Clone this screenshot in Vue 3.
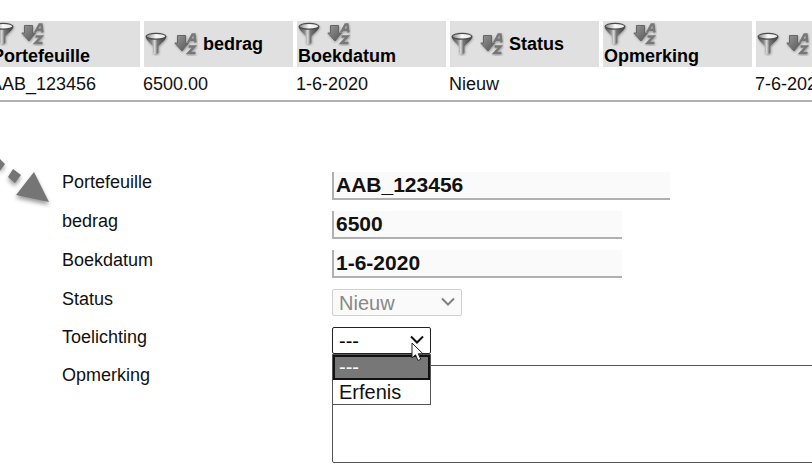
<script setup>
import { ref } from 'vue'

const columns = ['Portefeuille', 'bedrag', 'Boekdatum', 'Status', 'Opmerking', '']
const cells = ['AAB_123456', '6500.00', '1-6-2020', 'Nieuw', '', '7-6-2020']

const portfolio = ref('AAB_123456')
const amount = ref('6500')
const bookingDate = ref('1-6-2020')
const status = ref('Nieuw')
const explanation = ref('---')
const remark = ref('')
const options = ['---', 'Erfenis']
</script>

<template>
  <main class="page">
    <svg class="defs" width="0" height="0" aria-hidden="true">
      <defs>
        <linearGradient id="metal" x1="0" x2="1" y1="0" y2="0">
          <stop offset="0" stop-color="#444" />
          <stop offset="0.3" stop-color="#8a8a8a" />
          <stop offset="0.44" stop-color="#dcdcdc" />
          <stop offset="0.56" stop-color="#777" />
          <stop offset="1" stop-color="#3c3c3c" />
        </linearGradient>
        <linearGradient id="bowl" x1="0" x2="1" y1="0" y2="0">
          <stop offset="0" stop-color="#888" />
          <stop offset="0.5" stop-color="#fafafa" />
          <stop offset="1" stop-color="#e4e4e4" />
        </linearGradient>
        <linearGradient id="arrow" x1="0" x2="1" y1="0" y2="1">
          <stop offset="0" stop-color="#999" />
          <stop offset="1" stop-color="#555" />
        </linearGradient>
        <filter id="soft" x="-20%" y="-20%" width="140%" height="140%">
          <feGaussianBlur in="SourceGraphic" stdDeviation="0.4" result="shape" />
          <feDropShadow in="shape" dx="0.5" dy="1" stdDeviation="0.8" flood-color="#000" flood-opacity="0.35" />
        </filter>
      </defs>
    </svg>

    <table class="records">
      <thead>
        <tr>
          <th v-for="column in columns" :key="column" scope="col">
            <div class="head">
              <button type="button" class="tool" aria-label="Filter">
                <svg width="24" height="24" viewBox="0 0 24 24">
                  <g filter="url(#soft)">
                    <path d="M0.500 4.500C1 8 5.500 11 8 14.500V21Q11 23 13.500 21V14.500C16 11 21 8 21.500 4.500Z" fill="url(#metal)" />
                    <ellipse cx="11" cy="4.300" rx="9.800" ry="2.900" fill="url(#bowl)" stroke="#4c4c4c" stroke-width="1.200" />
                  </g>
                </svg>
              </button>
              <button type="button" class="tool" aria-label="Sorteren">
                <svg width="24" height="24" viewBox="0 0 24 24">
                  <g filter="url(#soft)">
                    <path d="M3.500 3.500H11.500V11H14.500L8 19L0.800 11H3.500Z" fill="url(#arrow)" stroke="#666" stroke-width="1" />
                    <path d="M14 10.500L18.500 2.500H20.500L21.500 10.500M16 7.800H20.500" fill="none" stroke="#777" stroke-width="2.400" />
                    <path d="M14.500 14.500H20.500L14.500 21H21.500" fill="none" stroke="#777" stroke-width="2.500" />
                  </g>
                </svg>
              </button>
              <span v-if="column">{{ column }}</span>
            </div>
          </th>
        </tr>
      </thead>
      <tbody>
        <tr>
          <td v-for="(cell, i) in cells" :key="i">{{ cell }}</td>
        </tr>
      </tbody>
    </table>

    <form class="form" @submit.prevent>
      <label for="portfolio">Portefeuille</label>
      <input id="portfolio" v-model="portfolio" class="field wide" type="text" />

      <label for="amount">bedrag</label>
      <input id="amount" v-model="amount" class="field" type="text" />

      <label for="booking-date">Boekdatum</label>
      <input id="booking-date" v-model="bookingDate" class="field" type="text" />

      <label for="status">Status</label>
      <div class="choice status">
        <select id="status" v-model="status" disabled>
          <option>Nieuw</option>
        </select>
        <svg class="chevron" width="14" height="10" viewBox="0 0 14 10" aria-hidden="true">
          <path d="M1 1.500L7 7.500L13 1.500" />
        </svg>
      </div>

      <label for="explanation">Toelichting</label>
      <div class="choice explanation">
        <select id="explanation" v-model="explanation">
          <option v-for="option in options" :key="option">{{ option }}</option>
        </select>
        <svg class="chevron" width="14" height="10" viewBox="0 0 14 10" aria-hidden="true">
          <path d="M1 1.500L7 7.500L13 1.500" />
        </svg>
        <ul class="menu" role="listbox" aria-label="Toelichting">
          <li
            v-for="option in options"
            :key="option"
            role="option"
            :aria-selected="option === explanation"
            :class="{ selected: option === explanation }"
            @click="explanation = option"
          >{{ option }}</li>
        </ul>
        <svg class="pointer" width="14" height="20" viewBox="0 0 14 20" aria-hidden="true">
          <path d="M1 1V16L4.500 12.800L7 18.500L9.800 17.300L7.300 11.800H12Z" />
        </svg>
      </div>

      <label for="remark">Opmerking</label>
      <textarea id="remark" v-model="remark"></textarea>
    </form>

    <svg class="callout" width="60" height="64" viewBox="0 0 60 64" aria-hidden="true">
      <path d="M-4 8L0 9L5 14L0 21L-4 18ZM13 19L21 25L15 33L8 27ZM34 22L49 52L16 45Z" />
    </svg>
  </main>
</template>

<style>
body {
  margin: 0;
  background: #fff;
}
</style>

<style scoped>
.page {
  position: relative;
  overflow: hidden;
  padding: 21px 0 10px;
  font: 18px/20px "Liberation Sans", Arial, sans-serif;
  color: #111;
}
.defs {
  position: absolute;
}
.records {
  width: calc(100% + 106px);
  margin-left: -10px;
  table-layout: fixed;
  border-collapse: separate;
  border-spacing: 0;
}
th {
  height: 44px;
  padding: 1px 0 1px 1px;
  border: solid #fff;
  border-width: 0 3px 0 1px;
  background: #e0e0e0;
  color: #000;
  text-align: left;
}
.head {
  display: flex;
  flex-wrap: wrap;
  align-items: center;
  column-gap: 5px;
}
.tool {
  display: block;
  width: 24px;
  height: 24px;
  padding: 0;
  border: 0;
  background: none;
}
.tool svg {
  display: block;
}
td {
  height: 33px;
  padding: 0;
  border-bottom: 2px solid #b0b0b0;
}
.form {
  display: grid;
  grid-template-columns: 270px 1fr;
  row-gap: 11px;
  align-items: start;
  margin: 70px -20px 0 62px;
}
.field {
  box-sizing: border-box;
  width: 290px;
  height: 28px;
  padding: 0 2px;
  border: solid #b0b0b0;
  border-width: 0 0 2px 2px;
  background: #fafafa;
  color: #111;
  font: bold 21px/24px "Liberation Sans", Arial, sans-serif;
  outline: 0;
}
.wide {
  width: 338px;
}
.choice {
  position: relative;
  height: 27px;
}
.status {
  width: 130px;
}
.explanation {
  width: 99px;
}
select {
  display: block;
  box-sizing: border-box;
  width: 100%;
  height: 27px;
  padding: 0 6px;
  border: 1px solid #222;
  border-radius: 2px;
  appearance: none;
  background: #fff;
  color: #000;
  font: 20px/24px "Liberation Sans", Arial, sans-serif;
  outline: 0;
}
select:disabled {
  border-color: #d0d0d0;
  background: #fafafa;
  color: #888;
  opacity: 1;
}
.chevron {
  position: absolute;
  top: 8px;
  right: 7px;
  fill: none;
  stroke: #111;
  stroke-width: 2;
  pointer-events: none;
}
.status .chevron {
  stroke: #808080;
}
.menu {
  position: absolute;
  z-index: 1;
  top: 27px;
  left: 0;
  right: 0;
  margin: 0;
  padding: 0;
  border: 1px solid #555;
  background: #fff;
  color: #111;
  font-size: 20px;
  line-height: 24px;
  list-style: none;
}
.menu li {
  padding: 0 6px;
}
.menu .selected {
  padding: 0 4px;
  border: 2px solid #111;
  background: #777;
  color: #fff;
  line-height: 21px;
}
.pointer {
  position: absolute;
  z-index: 2;
  top: 15px;
  left: 79px;
  fill: #fff;
  stroke: #222;
  stroke-width: 1;
  pointer-events: none;
}
textarea {
  display: block;
  box-sizing: border-box;
  width: 100%;
  height: 98px;
  padding: 2px;
  border: 1px solid #555;
  border-radius: 2px;
  background: #fff;
  font: inherit;
  resize: none;
  outline: 0;
}
.callout {
  position: absolute;
  top: 150px;
  left: 0;
  fill: #757575;
  filter: drop-shadow(0 3px 2px rgba(0, 0, 0, 0.4));
  pointer-events: none;
}
</style>
